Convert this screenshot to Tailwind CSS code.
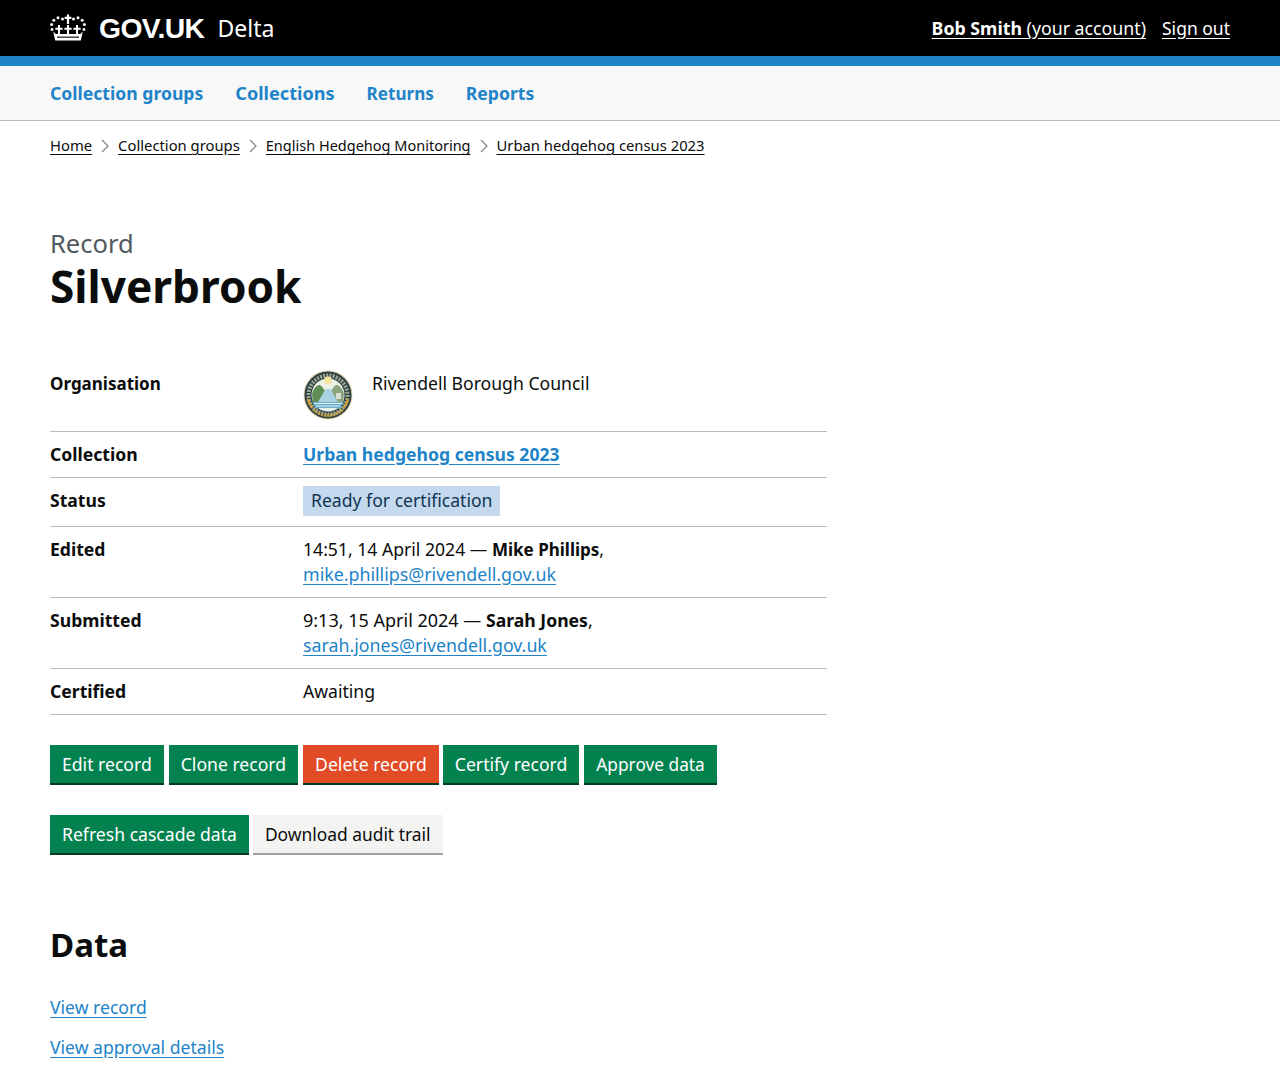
<!DOCTYPE html>
<html lang="en">
<head>
  <meta charset="UTF-8">
  <title>Record - Silverbrook</title>
  <script src="https://cdn.jsdelivr.net/npm/@tailwindcss/browser@4"></script>
</head>
<body class="bg-white text-[#0b0c0c] font-['Noto_Sans',sans-serif] text-[17.6px] leading-[25px] overflow-hidden">
  <!-- header -->
  <header class="bg-black h-[56px] px-[50px] flex items-center justify-between text-white">
    <div class="flex items-center">
      <svg class="w-[36px] h-[27px]" viewBox="0 0 36 27" fill="white">
        <!-- centre cross and arc of dots -->
        <path d="M16.900 0.500h2.200v2.300h2.300v2.200h-2.300v5h-2.200V5h-2.300V2.800h2.300z"/>
        <circle cx="12.500" cy="5" r="1.500"/><circle cx="23.500" cy="5" r="1.500"/>
        <circle cx="8" cy="3.800" r="1.500"/><circle cx="28" cy="3.800" r="1.500"/>
        <circle cx="3.800" cy="6.300" r="1.500"/><circle cx="32.200" cy="6.300" r="1.500"/>
        <circle cx="1.600" cy="10.500" r="1.500"/><circle cx="34.400" cy="10.500" r="1.500"/>
        <!-- three crosses over the band -->
        <path d="M17 11h2v2.800h2.600v1.900H19V20h-2v-4.300h-2.600v-1.900H17z"/>
        <path d="M8 11h2v2.800h2.600v1.900H10V20H8v-4.300H5.400v-1.900H8z"/>
        <path d="M26 11h2v2.800h2.600v1.900H28V20h-2v-4.300h-2.600v-1.900H26z"/>
        <circle cx="2" cy="15.500" r="1.400"/><circle cx="34" cy="15.500" r="1.400"/>
        <path d="M3.200 17.500l2.500 2.500h24.600l2.500-2.500-2 9H5.200z"/>
        <path d="M7 22.600h22v1.100H7z" fill="black"/>
      </svg>
      <span class="ml-[13px] text-[28.3px] font-bold leading-none tracking-[-0.6px] font-['Liberation_Sans',sans-serif]">GOV.UK</span>
      <span class="ml-[13px] mt-[1px] text-[23px] leading-none">Delta</span>
    </div>
    <div class="flex gap-[16px]">
      <a class="text-[17.75px] underline underline-offset-[3px]" href="#"><b>Bob Smith</b> (your account)</a>
      <a class="text-[17.5px] underline underline-offset-[3px]" href="#">Sign out</a>
    </div>
  </header>
  <div class="h-[10px] bg-[#2183c8]"></div>

  <!-- nav -->
  <nav class="h-[55px] bg-[#f8f8f8] border-b border-[#b9bcbd] px-[50px] flex items-center gap-[32px] font-bold text-[#2183c8]">
    <a href="#">Collection groups</a>
    <a class="text-[18.1px]" href="#">Collections</a>
    <a class="text-[17.1px]" href="#">Returns</a>
    <a href="#">Reports</a>
  </nav>

  <main class="px-[50px]">
    <!-- breadcrumbs -->
    <ol class="mt-[12px] flex items-center text-[14.8px] leading-[25px]">
      <li><a class="underline underline-offset-[3px]" href="#">Home</a></li>
      <li class="flex items-center"><svg class="w-[26px] h-[14px]" viewBox="0 0 26 14" fill="none" stroke="#7b8388" stroke-width="1.200"><path d="M10 1l6 6-6 6"/></svg><a class="underline underline-offset-[3px]" href="#">Collection groups</a></li>
      <li class="flex items-center"><svg class="w-[26px] h-[14px]" viewBox="0 0 26 14" fill="none" stroke="#7b8388" stroke-width="1.200"><path d="M10 1l6 6-6 6"/></svg><a class="text-[14.5px] underline underline-offset-[3px]" href="#">English Hedgehog Monitoring</a></li>
      <li class="flex items-center"><svg class="w-[26px] h-[14px]" viewBox="0 0 26 14" fill="none" stroke="#7b8388" stroke-width="1.200"><path d="M10 1l6 6-6 6"/></svg><a class="underline underline-offset-[3px]" href="#">Urban hedgehog census 2023</a></li>
    </ol>

    <!-- title -->
    <p class="mt-[68px] text-[#505a5f] text-[25.5px] leading-[35px]">Record</p>
    <h1 class="text-[44.2px] leading-[50px] font-bold">Silverbrook</h1>

    <!-- summary -->
    <dl class="mt-[49px] w-[777px]">
      <div class="flex border-b border-[#b9bcbd] h-[72px] pt-[11px]">
        <dt class="w-[253px] font-bold text-[17px]">Organisation</dt>
        <dd class="flex items-start">
          <svg class="w-[50px] h-[50px] -mt-[1px]" viewBox="0 0 50 50">
            <circle cx="25" cy="25" r="24.500" fill="#e0d3ad"/>
            <circle cx="25" cy="25" r="23.500" fill="#2a3d42"/>
            <circle cx="25" cy="25" r="19.500" fill="none" stroke="#9fa893" stroke-width="4" stroke-dasharray="2 1.200"/>
            <circle cx="25" cy="25" r="16.500" fill="#eef2e6"/>
            <circle cx="25" cy="10.500" r="4" fill="#f6e3a2"/>
            <path d="M9 24c2-7 5-9 8-9 3 2 5 6 6.500 9L19 34H10z" fill="#5f8f55"/>
            <path d="M41 24c-2-7-5-9-8-9-3 2-5 6-6.500 9L31 34h9z" fill="#8aa37d"/>
            <path d="M33 23h5v6h-5z" fill="#dcdfd6"/>
            <path d="M22.500 19h5L36 34H14z" fill="#a9d3e2"/>
            <path d="M9.500 32h31l-3 6.500H12.500z" fill="#6aaecb"/>
            <path d="M11 33.500h28M13 36h24M16 38.500h18" stroke="#dcf0f6" stroke-width="1"/>
            <path d="M10.500 39.500a20.500 20.500 0 0 0 29 0" fill="none" stroke="#c9a043" stroke-width="3" stroke-dasharray="2 1"/>
            <path d="M4.800 29a20.500 20.500 0 0 0 4.500 9M45.200 29a20.500 20.500 0 0 1-4.500 9" fill="none" stroke="#c9a043" stroke-width="2.500"/>
          </svg>
          <span class="ml-[19px]">Rivendell Borough Council</span>
        </dd>
      </div>
      <div class="flex border-b border-[#b9bcbd] h-[46px] pt-[10px]">
        <dt class="w-[253px] font-bold">Collection</dt>
        <dd><a class="font-bold text-[#2183c8] underline underline-offset-[3px]" href="#">Urban hedgehog census 2023</a></dd>
      </div>
      <div class="flex border-b border-[#b9bcbd] h-[49px] pt-[8px]">
        <dt class="w-[253px] font-bold pt-[2px]">Status</dt>
        <dd class="h-[30px] bg-[#c5d9ee] text-[#0f3553] px-[8px] pt-[2px]">Ready for certification</dd>
      </div>
      <div class="flex border-b border-[#b9bcbd] h-[71px] pt-[10px]">
        <dt class="w-[253px] font-bold">Edited</dt>
        <dd>14:51, 14 April 2024 — <b class="text-[17px]">Mike Phillips</b>,<br><a class="text-[17.8px] text-[#2183c8] underline underline-offset-[3px]" href="#">mike.phillips@rivendell.gov.uk</a></dd>
      </div>
      <div class="flex border-b border-[#b9bcbd] h-[71px] pt-[10px]">
        <dt class="w-[253px] font-bold">Submitted</dt>
        <dd class="text-[18px]">9:13, 15 April 2024 — <b class="text-[17.6px]">Sarah Jones</b>,<br><a class="text-[17.8px] text-[#2183c8] underline underline-offset-[3px]" href="#">sarah.jones@rivendell.gov.uk</a></dd>
      </div>
      <div class="flex border-b border-[#b9bcbd] h-[46px] pt-[10px]">
        <dt class="w-[253px] font-bold">Certified</dt>
        <dd>Awaiting</dd>
      </div>
    </dl>

    <!-- actions -->
    <div class="mt-[30px] flex gap-[5px]">
      <a class="h-[40px] px-[12px] pt-[7px] bg-[#038250] text-white border-b-2 border-[#033a22]" href="#">Edit record</a>
      <a class="h-[40px] px-[12px] pt-[7px] bg-[#038250] text-white border-b-2 border-[#033a22]" href="#">Clone record</a>
      <a class="h-[40px] px-[12px] pt-[7px] bg-[#e14b25] text-white border-b-2 border-[#033a22]" href="#">Delete record</a>
      <a class="-ml-[1px] h-[40px] px-[12px] pt-[7px] bg-[#038250] text-white border-b-2 border-[#033a22]" href="#">Certify record</a>
      <a class="h-[40px] px-[12px] pt-[7px] bg-[#038250] text-white border-b-2 border-[#033a22] text-[17.3px]" href="#">Approve data</a>
    </div>
    <div class="mt-[30px] flex gap-[4px]">
      <a class="h-[40px] px-[12px] pt-[7px] bg-[#038250] text-white border-b-2 border-[#033a22]" href="#">Refresh cascade data</a>
      <a class="h-[40px] px-[12px] pt-[7px] bg-[#f3f3f2] text-[#0b0c0c] border-b-2 border-[#a0a0a0] text-[17.4px]" href="#">Download audit trail</a>
    </div>

    <h2 class="mt-[70px] text-[33px] leading-[40px] font-bold">Data</h2>
    <p class="mt-[30px]"><a class="text-[#2183c8] underline underline-offset-[3px]" href="#">View record</a></p>
    <p class="mt-[15px]"><a class="text-[#2183c8] underline underline-offset-[3px]" href="#">View approval details</a></p>
  </main>
</body>
</html>
